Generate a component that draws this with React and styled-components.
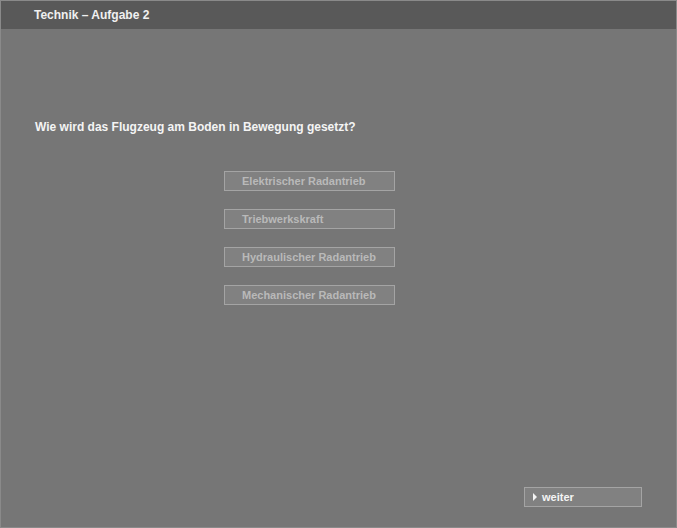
import React from 'react';
import styled, { createGlobalStyle } from 'styled-components';

const Global = createGlobalStyle`
  html, body {
    margin: 0;
    padding: 0;
    background: #767676;
  }
  body {
    font-family: "Liberation Sans", Arial, sans-serif;
  }
`;

const Frame = styled.div`
  width: 677px;
  height: 528px;
  box-sizing: border-box;
  border: 1px solid #8a8a8a;
  background: #767676;
  display: flex;
  flex-direction: column;
`;

const Header = styled.div`
  height: 28px;
  background: #595959;
  display: flex;
  align-items: center;
  padding-left: 33px;
  color: #f0f0f0;
  font-size: 12px;
  font-weight: 700;
`;

const Body = styled.div`
  flex: 1;
  display: flex;
  flex-direction: column;
  padding: 91px 34px 0;
`;

const Question = styled.div`
  color: #f4f4f4;
  font-size: 12px;
  font-weight: 700;
  line-height: 14px;
`;

const Answers = styled.div`
  margin-top: 37px;
  margin-left: 189px;
  display: flex;
  flex-direction: column;
  gap: 18px;
`;

const Answer = styled.div`
  width: 171px;
  height: 20px;
  box-sizing: border-box;
  border: 1px solid #a4a4a4;
  background: #818181;
  color: #b9b9b9;
  font-size: 11px;
  font-weight: 700;
  display: flex;
  align-items: center;
  padding-left: 17px;
`;

const Footer = styled.div`
  margin-top: auto;
  display: flex;
  justify-content: flex-end;
  padding: 0 34px 20px 0;
`;

const Next = styled.div`
  width: 118px;
  height: 20px;
  box-sizing: border-box;
  border: 1px solid #a4a4a4;
  background: #818181;
  color: #f4f4f4;
  font-size: 11px;
  font-weight: 700;
  display: flex;
  align-items: center;
  gap: 5px;
  padding-left: 8px;
`;

const Arrow = styled.span`
  width: 0;
  height: 0;
  border-top: 4px solid transparent;
  border-bottom: 4px solid transparent;
  border-left: 4px solid #f4f4f4;
`;

const answers = [
  'Elektrischer Radantrieb',
  'Triebwerkskraft',
  'Hydraulischer Radantrieb',
  'Mechanischer Radantrieb',
];

export default function App() {
  return (
    <>
      <Global />
      <Frame>
        <Header>Technik – Aufgabe 2</Header>
        <Body>
          <Question>Wie wird das Flugzeug am Boden in Bewegung gesetzt?</Question>
          <Answers>
            {answers.map((a) => (
              <Answer key={a}>{a}</Answer>
            ))}
          </Answers>
        </Body>
        <Footer>
          <Next>
            <Arrow />
            weiter
          </Next>
        </Footer>
      </Frame>
    </>
  );
}
